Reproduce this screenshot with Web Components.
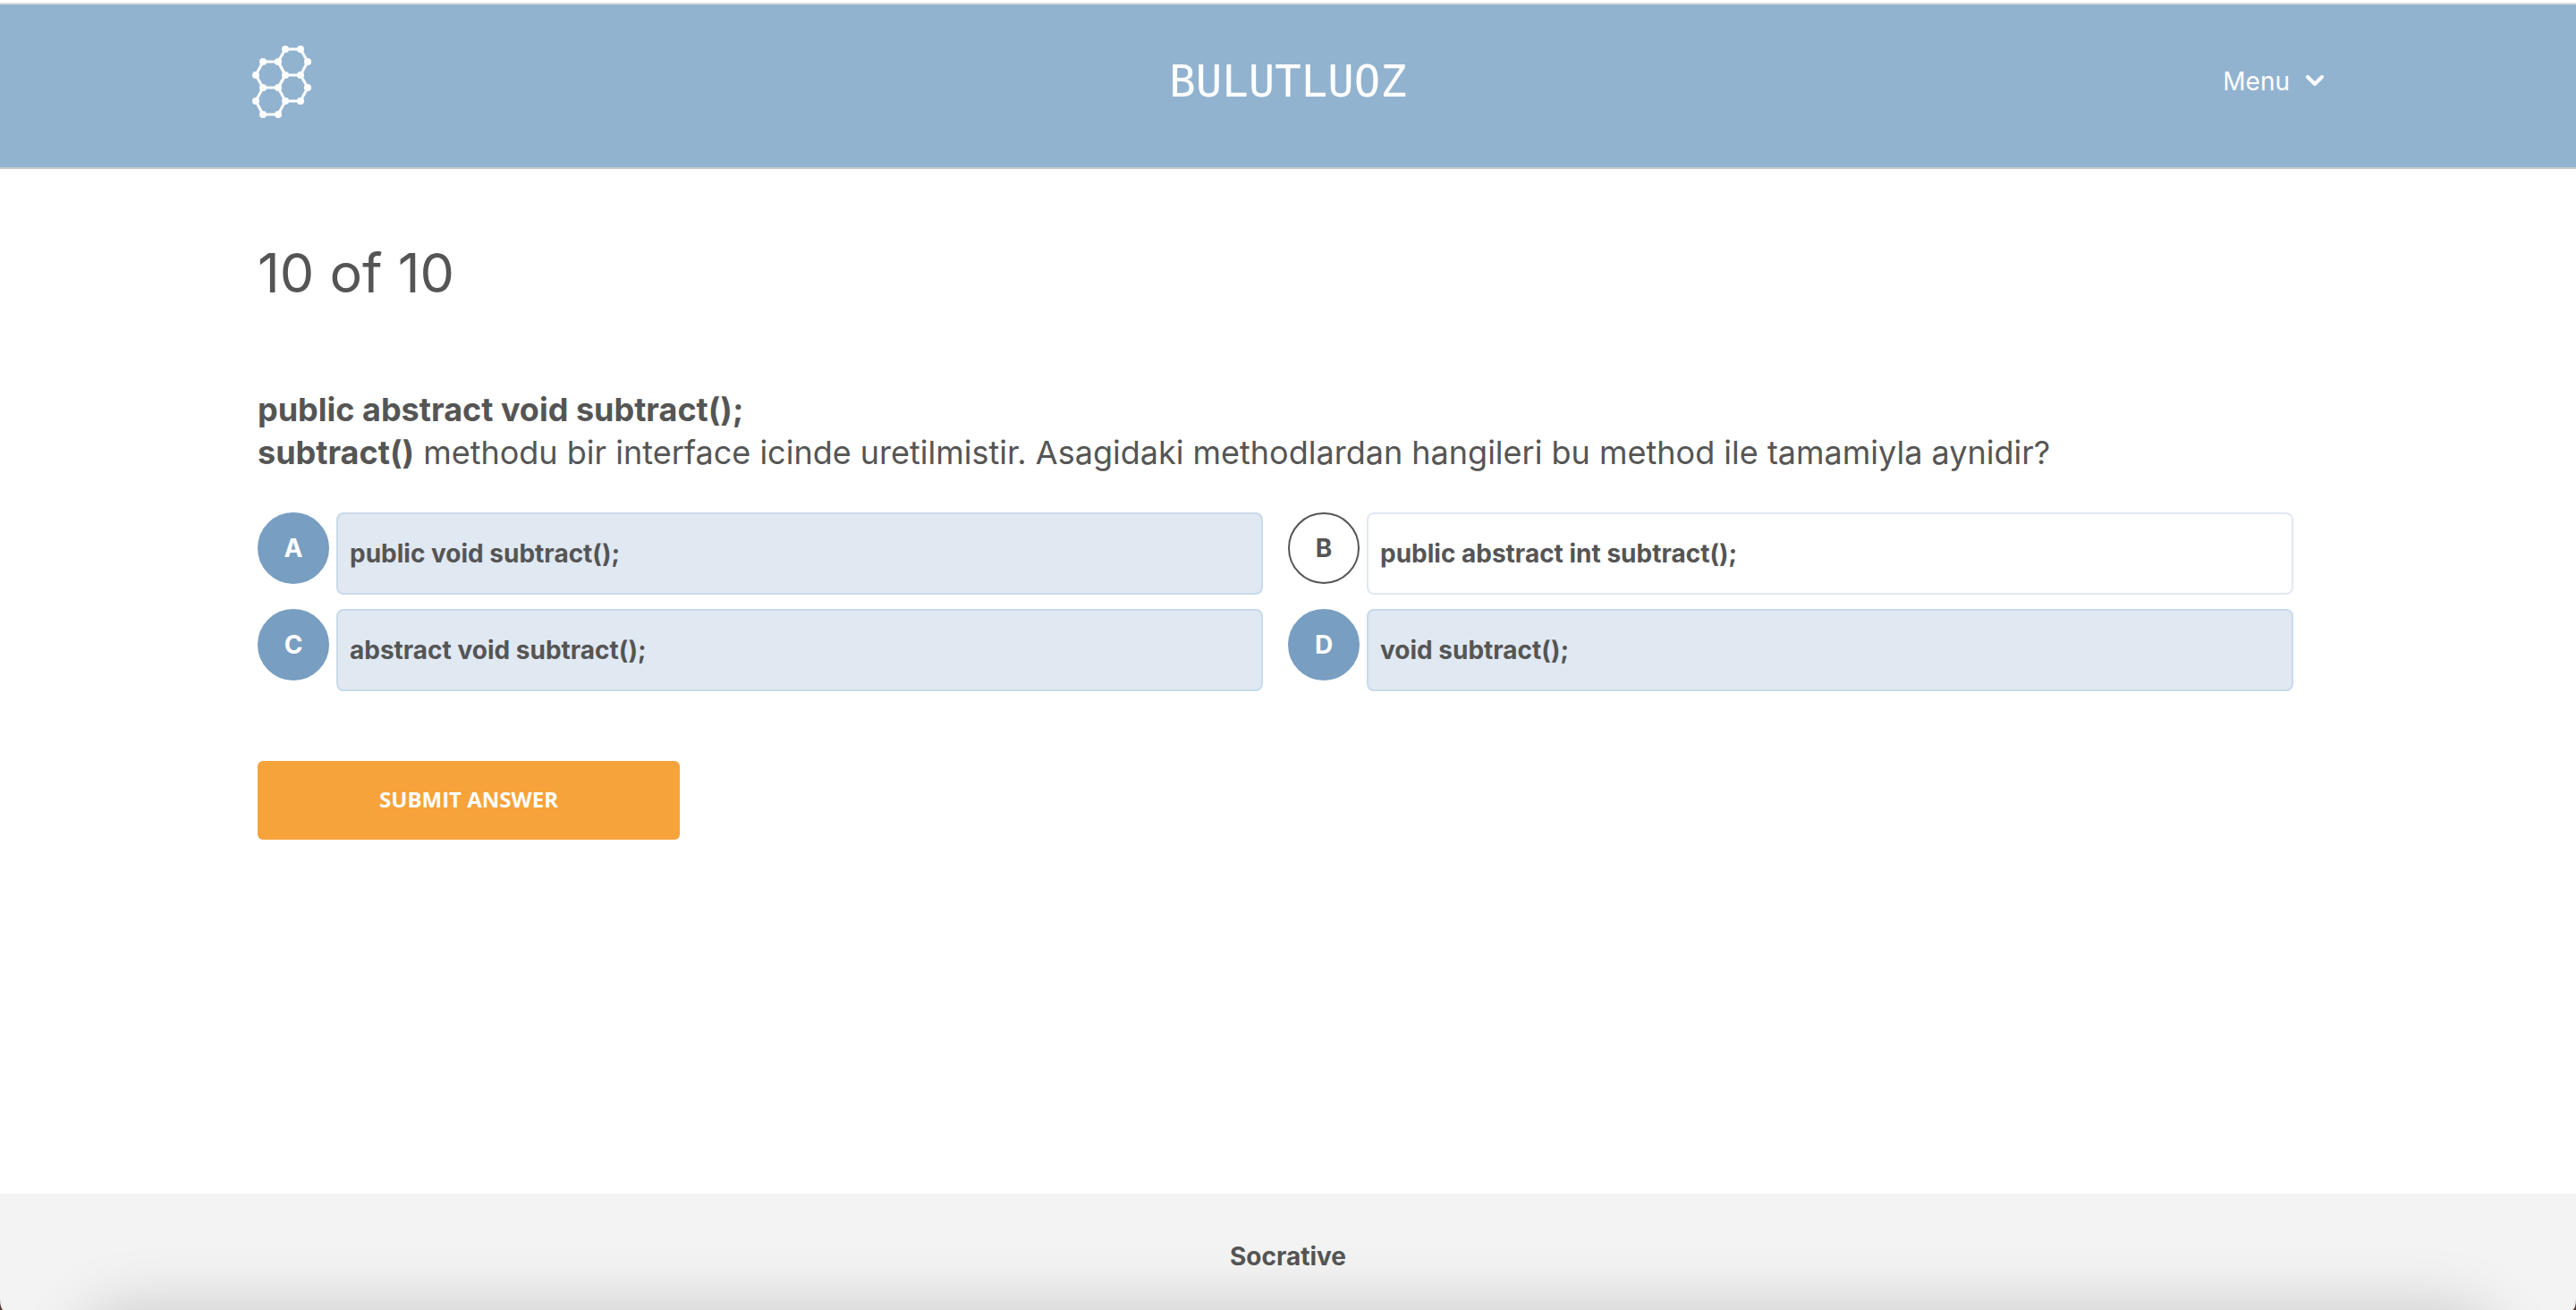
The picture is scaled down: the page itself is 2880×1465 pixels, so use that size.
<!DOCTYPE html>
<html lang="tr">
<head>
<meta charset="utf-8">
<title>Socrative</title>
<style>
  body { margin: 0; background: #fff; color: #555; font-family: Inter, "Liberation Sans", sans-serif; font-size: 28px; }
</style>
</head>
<body>
<quiz-page>
  <quiz-header slot="header" room="BULUTLUOZ"></quiz-header>
  <quiz-question progress="10 of 10">
    <b>public abstract void subtract();</b><br>
    <b>subtract()</b> methodu bir interface icinde uretilmistir. Asagidaki methodlardan hangileri bu method ile tamamiyla aynidir?
    <answer-option slot="answers" letter="A" checked>public void subtract();</answer-option>
    <answer-option slot="answers" letter="B">public abstract int subtract();</answer-option>
    <answer-option slot="answers" letter="C" checked>abstract void subtract();</answer-option>
    <answer-option slot="answers" letter="D" checked>void subtract();</answer-option>
    <submit-button slot="action">SUBMIT ANSWER</submit-button>
  </quiz-question>
  <quiz-footer slot="footer">Socrative</quiz-footer>
</quiz-page>

<script>
function define(name, render) {
  customElements.define(name, class extends HTMLElement {
    connectedCallback() {
      if (this.shadowRoot) return;
      this.attachShadow({ mode: 'open' }).innerHTML = '<style>*{box-sizing:border-box}</style>' + render(this);
    }
  });
}

define('quiz-page', () => `
  <style>
    :host { display: flex; flex-direction: column; min-height: 100vh; }
    main { flex: 1; padding: 78px 10% 40px; }
  </style>
  <slot name="header"></slot>
  <main><slot></slot></main>
  <slot name="footer"></slot>`);

define('molecule-logo', () => `
  <style>:host, svg { display: block; }</style>
  <svg width="66" height="82" viewBox="0 0 66 82" aria-hidden="true">
    <g fill="none" stroke="#fff" stroke-width="3">
      <path d="M37 4H54L62 18L54 33H37L29 18Z"/>
      <path d="M12 18H29L37 33L29 47H12L4 33Z"/>
      <path d="M54 33L62 47L54 62H37L29 47"/>
      <path d="M12 47L4 62L12 77H29L37 62"/>
      <path d="M37 33L29 47"/>
    </g>
    <g fill="#fff">
      <circle cx="37" cy="4" r="4"/><circle cx="54" cy="4" r="4"/><circle cx="62" cy="18" r="4"/>
      <circle cx="12" cy="18" r="4"/><circle cx="29" cy="18" r="4"/><circle cx="4" cy="33" r="4"/>
      <circle cx="37" cy="33" r="4"/><circle cx="54" cy="33" r="4"/><circle cx="12" cy="47" r="4"/>
      <circle cx="29" cy="47" r="4"/><circle cx="62" cy="47" r="4"/><circle cx="4" cy="62" r="4"/>
      <circle cx="37" cy="62" r="4"/><circle cx="54" cy="62" r="4"/><circle cx="12" cy="77" r="4"/>
      <circle cx="29" cy="77" r="4"/>
    </g>
  </svg>`);

define('quiz-header', el => `
  <style>
    :host { display: block; border-top: 3px solid #fff; }
    header { display: grid; grid-template-columns: 1fr auto 1fr; align-items: center; height: 186px;
      padding: 0 calc(10% - 6px) 8px; background: #92b3cf; border-top: 2px solid #ddd; border-bottom: 2px solid #c4c9ce; color: #fff; }
    h1 { margin: 0; font: 400 49px/60px "DejaVu Sans Mono", monospace; }
    button { justify-self: end; display: flex; align-items: center; gap: 18px; padding: 0 0 2px; border: 0; background: none; color: inherit; font: 400 28px/36px Inter, sans-serif; }
  </style>
  <header>
    <molecule-logo></molecule-logo>
    <h1>${el.getAttribute('room')}</h1>
    <button type="button">Menu
      <svg width="20" height="14" viewBox="0 0 20 14" fill="none" stroke="#fff" stroke-width="4" stroke-linecap="round" stroke-linejoin="round" aria-hidden="true"><path d="M2 2L10 10L18 2"/></svg>
    </button>
  </header>`);

define('quiz-question', el => `
  <style>
    h2 { margin: 0 0 91px; font-size: 61px; line-height: 76px; font-weight: 400; }
    p { margin: 0 0 43px; font-size: 36px; line-height: 48px; }
    .answers { display: grid; grid-template-columns: 1fr 1fr; gap: 16px 28px; margin: 0 28px 78px 0; }
  </style>
  <h2>${el.getAttribute('progress')}</h2>
  <p><slot></slot></p>
  <div class="answers" role="group"><slot name="answers"></slot></div>
  <slot name="action"></slot>`);

define('answer-option', el => `
  <style>
    label { display: flex; align-items: flex-start; gap: 8px; font-weight: 700; font-size: 28px; line-height: 36px; }
    .mark { display: grid; place-items: center; width: 80px; height: 80px; flex: none; }
    .mark > * { grid-area: 1 / 1; }
    input { appearance: none; width: 80px; height: 80px; margin: 0; border: 2px solid #555; border-radius: 50%; background: #fff; }
    input:checked { background: #789ec1; border-color: #789ec1; }
    .letter { z-index: 1; }
    input:checked + .letter { color: #fff; }
    .text { flex: 1; padding: 26px 13px; border: 2px solid #e0e8f2; border-radius: 8px; }
    label:has(:checked) .text { background: #e0e8f2; border-color: #c9daea; }
  </style>
  <label>
    <span class="mark"><input type="checkbox" ${el.hasAttribute('checked') ? 'checked' : ''}><span class="letter">${el.getAttribute('letter')}</span></span>
    <span class="text"><slot></slot></span>
  </label>`);

define('submit-button', () => `
  <style>
    button { display: block; width: 472px; max-width: 100%; padding: 25px 26px 27px; border: 0; border-radius: 6px; background: #f5a33a; color: #fff;
      font: 700 24px/36px "Open Sans", sans-serif; }
  </style>
  <button type="button"><slot></slot></button>`);

define('quiz-footer', () => `
  <style>
    :host { display: block; background: #53352c; }
    footer { padding: 52px 0 42px; background: #f3f3f3; border-radius: 0 0 4px 4px / 0 0 12px 12px; text-align: center; font-weight: 700; line-height: 36px; overflow: hidden; position: relative; }
    /* soft shadow rising from the lower edge of the window */
    footer::after { content: ""; position: absolute; left: 90px; right: 90px; top: 100%; height: 200px; border-radius: 50px; box-shadow: 0 0 70px rgba(0,0,0,.18); }
  </style>
  <footer><slot></slot></footer>`);
</script>
</body>
</html>
